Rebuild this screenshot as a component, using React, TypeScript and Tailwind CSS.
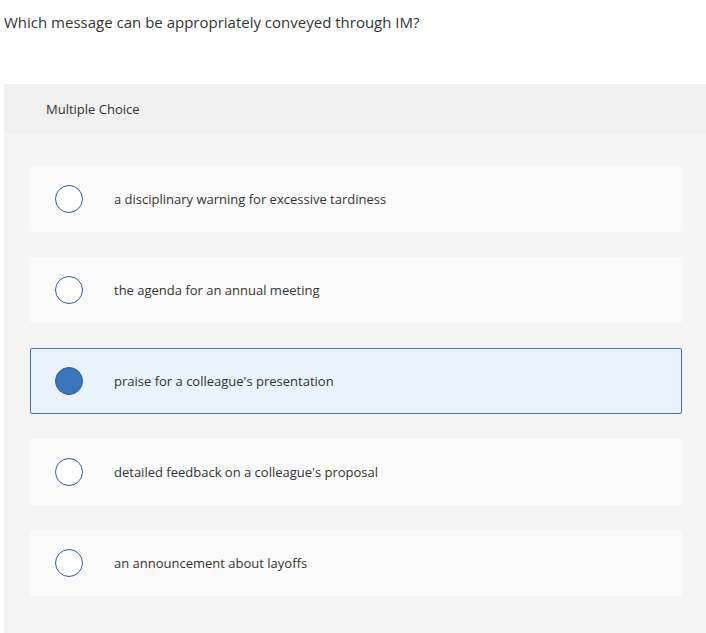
import React from "react";

const options = [
  "a disciplinary warning for excessive tardiness",
  "the agenda for an annual meeting",
  "praise for a colleague's presentation",
  "detailed feedback on a colleague's proposal",
  "an announcement about layoffs",
];

export default function App() {
  const selected = 2;
  return (
    <div className="w-[706px] h-[633px] bg-white text-[#333] overflow-hidden" style={{ fontFamily: "'Open Sans', sans-serif" }}>
      <div className="px-[4px] pt-[12px] h-[84px] text-[15px] leading-[20px]">
        Which message can be appropriately conveyed through IM?
      </div>
      <div className="ml-[4px] bg-[#f5f5f5] h-[549px]">
        <div className="h-[50px] bg-[#f0f0f0] flex items-center pl-[42px] pt-[1px] text-[13px]">Multiple Choice</div>
        <div className="px-[26px] pt-[32px] flex flex-col gap-[25px] pr-[24px]">
          {options.map((o, i) => {
            const on = i === selected;
            return (
              <div
                key={o}
                className={`h-[66px] rounded-[2px] flex items-center pl-[24px] border ${
                  on ? "bg-[#eaf2fb] border-[#3a76b9]" : "bg-[#fafafa] border-transparent"
                }`}
              >
                <span
                  className={`w-[28px] h-[28px] rounded-full border-[1.5px] border-[#2f5f8f] flex-shrink-0 ${
                    on ? "bg-[#3a76b9]" : "bg-white"
                  }`}
                />
                <span className="ml-[31px] pt-[1px] text-[13px]">{o}</span>
              </div>
            );
          })}
        </div>
      </div>
    </div>
  );
}
